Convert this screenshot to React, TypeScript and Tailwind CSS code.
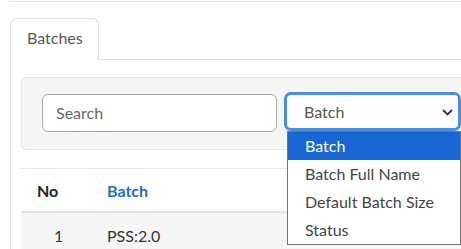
export default function App() {
  const options = ["Batch", "Batch Full Name", "Default Batch Size", "Status"]
  return (
    <div className="w-[461px] h-[249px] overflow-hidden bg-white text-[16px] text-[#555] font-['Lato','Open_Sans',sans-serif]">
      <div className="mt-[1px] ml-[9px] border-t border-[#e6e6e6]" />
      <div className="flex pl-[10px] pt-[16px]">
        <div className="w-[89px] h-[42px] border border-b-0 border-[#e0e0e0] rounded-t-[7px] pl-[16px] pt-[7px] text-[#555]">Batches</div>
        <div className="flex-1 border-b border-[#e0e0e0]" />
      </div>
      <div className="ml-[10px] border-l border-[#e6e6e6] pl-[10px] pt-[17px] w-[500px]">
        <div className="relative flex items-start h-[73px] bg-[#f5f5f5] border border-[#e3e3e3] rounded-[5px] pl-[20px] pt-[16px]">
          <div className="w-[235px] h-[38px] bg-white border border-[#aaa] rounded-[6px] pl-[13px] flex items-center text-[#666]">Search</div>
          <div className="relative ml-[7px] -mt-[2px] w-[177px] h-[39px] bg-white border-[3px] border-[#4a8fdc] rounded-[7px] pl-[17px] flex items-center text-[#555]">
            Batch
            <svg className="absolute right-[5px] top-[14px]" width="11" height="7" viewBox="0 0 11 7" fill="none" stroke="#333" strokeWidth="1.8">
              <path d="M1 1l4.5 4.5L10 1" />
            </svg>
            <div className="absolute left-[0px] top-[36px] w-[174px] bg-white border border-[#767676] z-10">
              {options.map((o, i) => (
                <div key={o} className={`h-[28px] pl-[17px] flex items-center ${i === 0 ? "bg-[#1967d2] text-white" : "text-[#444]"}`}>{o}</div>
              ))}
            </div>
          </div>
        </div>
        <div className="mt-[18px] border-t border-[#e6e6e6]">
          <div className="flex h-[44px] items-center border-b-2 border-[#e3e3e3] font-bold">
            <div className="w-[86px] pl-[16px] pt-[1px] text-[#222]">No</div>
            <div className="text-[#1a6fc9] pt-[1px]">Batch</div>
          </div>
          <div className="flex h-[40px] items-center bg-[#f5f5f5] text-[#333]">
            <div className="w-[86px] pl-[33px] pt-[6px]">1</div>
            <div className="pt-[6px]">PSS:2.0</div>
          </div>
        </div>
      </div>
    </div>
  )
}
